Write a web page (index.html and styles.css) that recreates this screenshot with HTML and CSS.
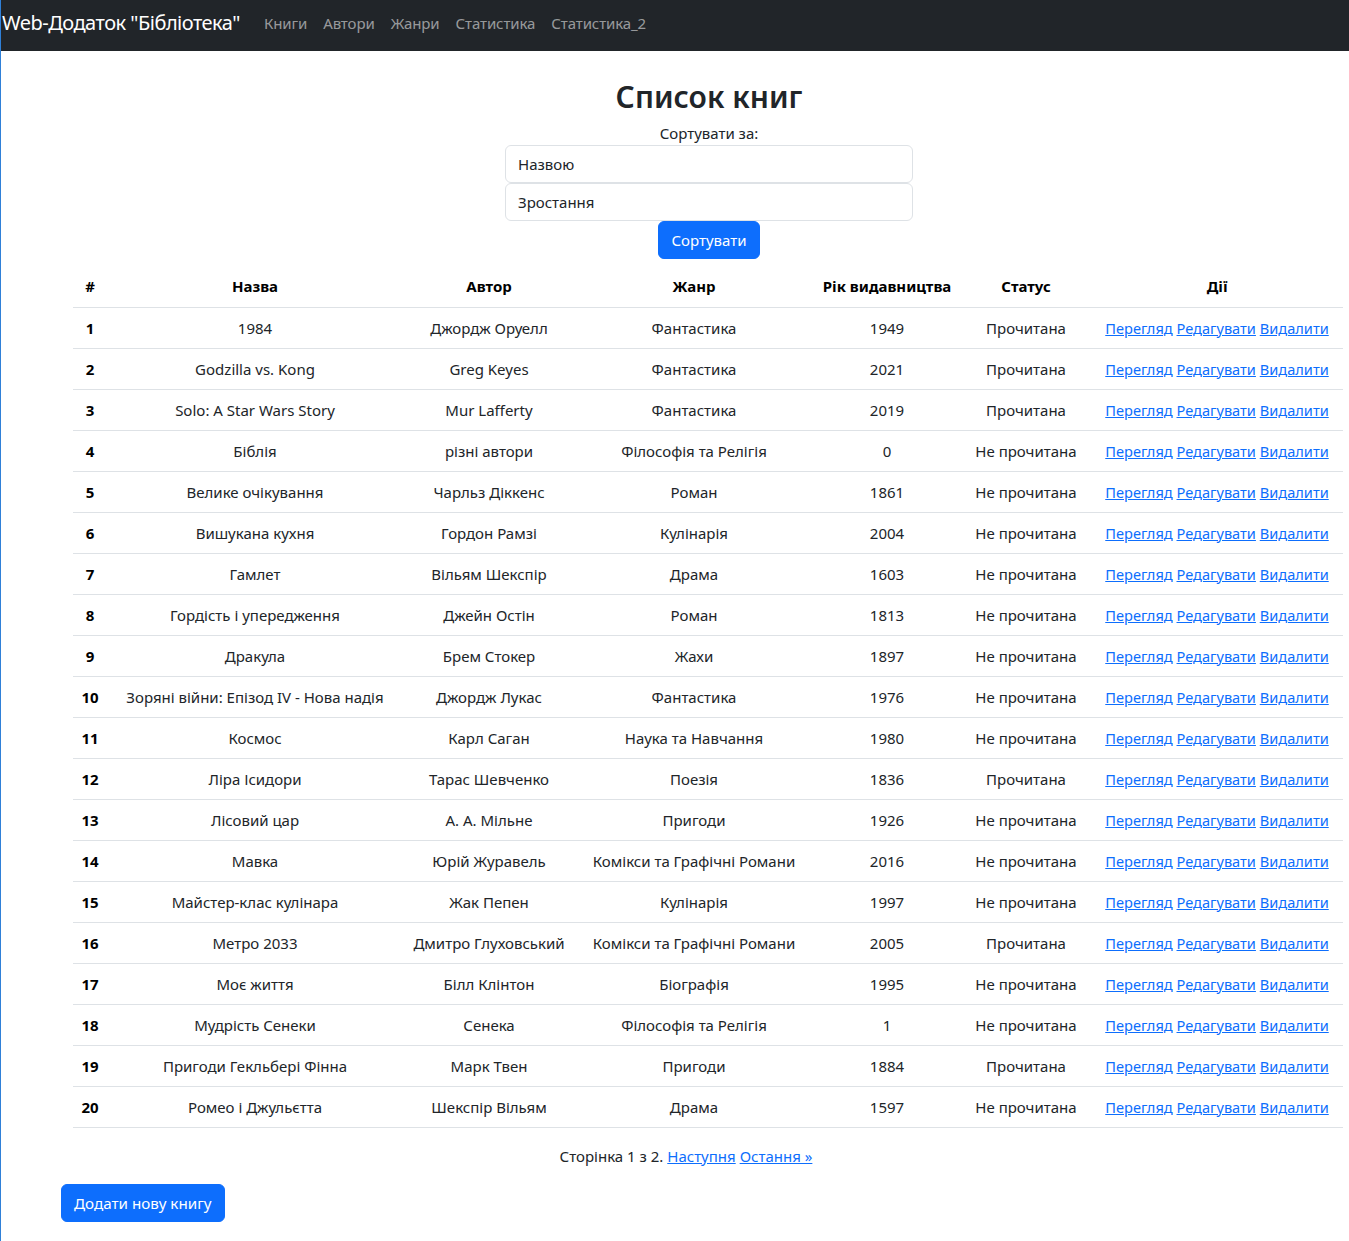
FILE: index.html
```html
<!DOCTYPE html>
<html lang="uk">
<head>
<meta charset="utf-8">
<title>Список книг</title>
<link rel="stylesheet" href="styles.css">
</head>
<body>
<nav class="navbar">
  <a class="brand" href="#">Web-Додаток "Бібліотека"</a>
  <ul class="nav-links">
    <li><a href="#">Книги</a></li>
    <li><a href="#">Автори</a></li>
    <li><a href="#">Жанри</a></li>
    <li><a href="#">Статистика</a></li>
    <li><a href="#">Статистика_2</a></li>
  </ul>
</nav>
<main class="page">
  <div class="content">
    <h1 class="title">Список книг</h1>
    <form class="sort-form">
      <label class="sort-label">Сортувати за:</label>
      <div class="select-box">Назвою</div>
      <div class="select-box">Зростання</div>
      <button type="button" class="btn">Сортувати</button>
    </form>
    <table class="books">
      <colgroup>
        <col class="c-num"><col class="c-title"><col class="c-author"><col class="c-genre"><col class="c-year"><col class="c-status"><col class="c-actions">
      </colgroup>
      <thead>
        <tr><th>#</th><th>Назва</th><th>Автор</th><th>Жанр</th><th>Рік видавництва</th><th>Статус</th><th>Дії</th></tr>
      </thead>
      <tbody>
        <tr><th>1</th><td>1984</td><td>Джордж Оруелл</td><td>Фантастика</td><td>1949</td><td>Прочитана</td><td class="acts"><a href="#">Перегляд</a> <a href="#">Редагувати</a> <a href="#">Видалити</a></td></tr>
        <tr><th>2</th><td>Godzilla vs. Kong</td><td>Greg Keyes</td><td>Фантастика</td><td>2021</td><td>Прочитана</td><td class="acts"><a href="#">Перегляд</a> <a href="#">Редагувати</a> <a href="#">Видалити</a></td></tr>
        <tr><th>3</th><td>Solo: A Star Wars Story</td><td>Mur Lafferty</td><td>Фантастика</td><td>2019</td><td>Прочитана</td><td class="acts"><a href="#">Перегляд</a> <a href="#">Редагувати</a> <a href="#">Видалити</a></td></tr>
        <tr><th>4</th><td>Біблія</td><td>різні автори</td><td>Філософія та Релігія</td><td>0</td><td>Не прочитана</td><td class="acts"><a href="#">Перегляд</a> <a href="#">Редагувати</a> <a href="#">Видалити</a></td></tr>
        <tr><th>5</th><td>Велике очікування</td><td>Чарльз Діккенс</td><td>Роман</td><td>1861</td><td>Не прочитана</td><td class="acts"><a href="#">Перегляд</a> <a href="#">Редагувати</a> <a href="#">Видалити</a></td></tr>
        <tr><th>6</th><td>Вишукана кухня</td><td>Гордон Рамзі</td><td>Кулінарія</td><td>2004</td><td>Не прочитана</td><td class="acts"><a href="#">Перегляд</a> <a href="#">Редагувати</a> <a href="#">Видалити</a></td></tr>
        <tr><th>7</th><td>Гамлет</td><td>Вільям Шекспір</td><td>Драма</td><td>1603</td><td>Не прочитана</td><td class="acts"><a href="#">Перегляд</a> <a href="#">Редагувати</a> <a href="#">Видалити</a></td></tr>
        <tr><th>8</th><td>Гордість і упередження</td><td>Джейн Остін</td><td>Роман</td><td>1813</td><td>Не прочитана</td><td class="acts"><a href="#">Перегляд</a> <a href="#">Редагувати</a> <a href="#">Видалити</a></td></tr>
        <tr><th>9</th><td>Дракула</td><td>Брем Стокер</td><td>Жахи</td><td>1897</td><td>Не прочитана</td><td class="acts"><a href="#">Перегляд</a> <a href="#">Редагувати</a> <a href="#">Видалити</a></td></tr>
        <tr><th>10</th><td>Зоряні війни: Епізод IV - Нова надія</td><td>Джордж Лукас</td><td>Фантастика</td><td>1976</td><td>Не прочитана</td><td class="acts"><a href="#">Перегляд</a> <a href="#">Редагувати</a> <a href="#">Видалити</a></td></tr>
        <tr><th>11</th><td>Космос</td><td>Карл Саган</td><td>Наука та Навчання</td><td>1980</td><td>Не прочитана</td><td class="acts"><a href="#">Перегляд</a> <a href="#">Редагувати</a> <a href="#">Видалити</a></td></tr>
        <tr><th>12</th><td>Ліра Ісидори</td><td>Тарас Шевченко</td><td>Поезія</td><td>1836</td><td>Прочитана</td><td class="acts"><a href="#">Перегляд</a> <a href="#">Редагувати</a> <a href="#">Видалити</a></td></tr>
        <tr><th>13</th><td>Лісовий цар</td><td>А. А. Мільне</td><td>Пригоди</td><td>1926</td><td>Не прочитана</td><td class="acts"><a href="#">Перегляд</a> <a href="#">Редагувати</a> <a href="#">Видалити</a></td></tr>
        <tr><th>14</th><td>Мавка</td><td>Юрій Журавель</td><td>Комікси та Графічні Романи</td><td>2016</td><td>Не прочитана</td><td class="acts"><a href="#">Перегляд</a> <a href="#">Редагувати</a> <a href="#">Видалити</a></td></tr>
        <tr><th>15</th><td>Майстер-клас кулінара</td><td>Жак Пепен</td><td>Кулінарія</td><td>1997</td><td>Не прочитана</td><td class="acts"><a href="#">Перегляд</a> <a href="#">Редагувати</a> <a href="#">Видалити</a></td></tr>
        <tr><th>16</th><td>Метро 2033</td><td>Дмитро Глуховський</td><td>Комікси та Графічні Романи</td><td>2005</td><td>Прочитана</td><td class="acts"><a href="#">Перегляд</a> <a href="#">Редагувати</a> <a href="#">Видалити</a></td></tr>
        <tr><th>17</th><td>Моє життя</td><td>Білл Клінтон</td><td>Біографія</td><td>1995</td><td>Не прочитана</td><td class="acts"><a href="#">Перегляд</a> <a href="#">Редагувати</a> <a href="#">Видалити</a></td></tr>
        <tr><th>18</th><td>Мудрість Сенеки</td><td>Сенека</td><td>Філософія та Релігія</td><td>1</td><td>Не прочитана</td><td class="acts"><a href="#">Перегляд</a> <a href="#">Редагувати</a> <a href="#">Видалити</a></td></tr>
        <tr><th>19</th><td>Пригоди Гекльбері Фінна</td><td>Марк Твен</td><td>Пригоди</td><td>1884</td><td>Прочитана</td><td class="acts"><a href="#">Перегляд</a> <a href="#">Редагувати</a> <a href="#">Видалити</a></td></tr>
        <tr><th>20</th><td>Ромео і Джульєтта</td><td>Шекспір Вільям</td><td>Драма</td><td>1597</td><td>Не прочитана</td><td class="acts"><a href="#">Перегляд</a> <a href="#">Редагувати</a> <a href="#">Видалити</a></td></tr>
      </tbody>
    </table>
  </div>
  <div class="footer-area">
    <p class="pager">Сторінка 1 з 2. <a href="#">Наступня</a> <a href="#">Остання »</a></p>
    <button type="button" class="btn btn-add">Додати нову книгу</button>
  </div>
</main>
</body>
</html>
```

FILE: styles.css
```css
* { box-sizing: border-box; }
html, body { margin: 0; padding: 0; }
body {
  font-family: "Noto Sans", "Open Sans", sans-serif;
  font-size: 15px;
  line-height: 24px;
  color: #212529;
  background: #fff;
  border-left: 1px solid #2f80d8;
  min-height: 1241px;
}
a { color: #0d6efd; text-decoration: underline; }

.navbar {
  height: 51px;
  background: #212529;
  display: flex;
  align-items: center;
  padding: 0 0 5px 1px;
}
.brand {
  color: #fff;
  text-decoration: none;
  font-size: 20px;
  letter-spacing: -0.5px;
  margin-right: 16px;
}
.nav-links {
  list-style: none;
  margin: 0;
  padding: 0;
  display: flex;
}
.nav-links a {
  display: block;
  padding: 0 8px;
  color: rgba(255,255,255,.55);
  text-decoration: none;
  font-size: 15px;
  letter-spacing: -0.1px;
}

.content {
  margin-left: 72px;
  width: 1272px;
  display: flex;
  flex-direction: column;
}
.title {
  margin: 26px 0 0;
  text-align: center;
  font-size: 30px;
  line-height: 40px;
  font-weight: 600;
}
.sort-form {
  display: flex;
  flex-direction: column;
  align-items: center;
  margin-top: 4px;
}
.sort-label { display: block; font-size: 15px; }
.select-box {
  width: 408px;
  height: 38px;
  border: 1px solid #dee2e6;
  border-radius: 6px;
  padding: 6px 12px;
  font-size: 15px;
}
.btn {
  background: #0d6efd;
  color: #fff;
  border: 1px solid #0d6efd;
  border-radius: 6px;
  height: 38px;
  padding: 0 12px;
  font-family: inherit;
  font-size: 15px;
}

.books {
  margin-top: 7px;
  width: 1270px;
  border-collapse: collapse;
  table-layout: fixed;
}
.c-num { width: 34px; }
.c-title { width: 296px; }
.c-author { width: 172px; }
.c-genre { width: 238px; }
.c-year { width: 148px; }
.c-status { width: 130px; }
.c-actions { width: 252px; }
.books th, .books td {
  padding: 8px 0;
  height: 41px;
  text-align: center;
  border-bottom: 1px solid #dee2e6;
  white-space: nowrap;
  font-size: 15px;
}
.books th { font-weight: 700; color: #000; }
.books td.acts { font-size: 14.6px; }

.footer-area {
  margin-left: 60px;
  width: 1250px;
  display: flex;
  flex-direction: column;
  align-items: flex-start;
}
.pager {
  align-self: stretch;
  text-align: center;
  margin: 16px 0 0;
  font-size: 15px;
}
.btn-add {
  margin-top: 16px;
  padding: 0 12px;
  font-size: 15.2px;
}
```
